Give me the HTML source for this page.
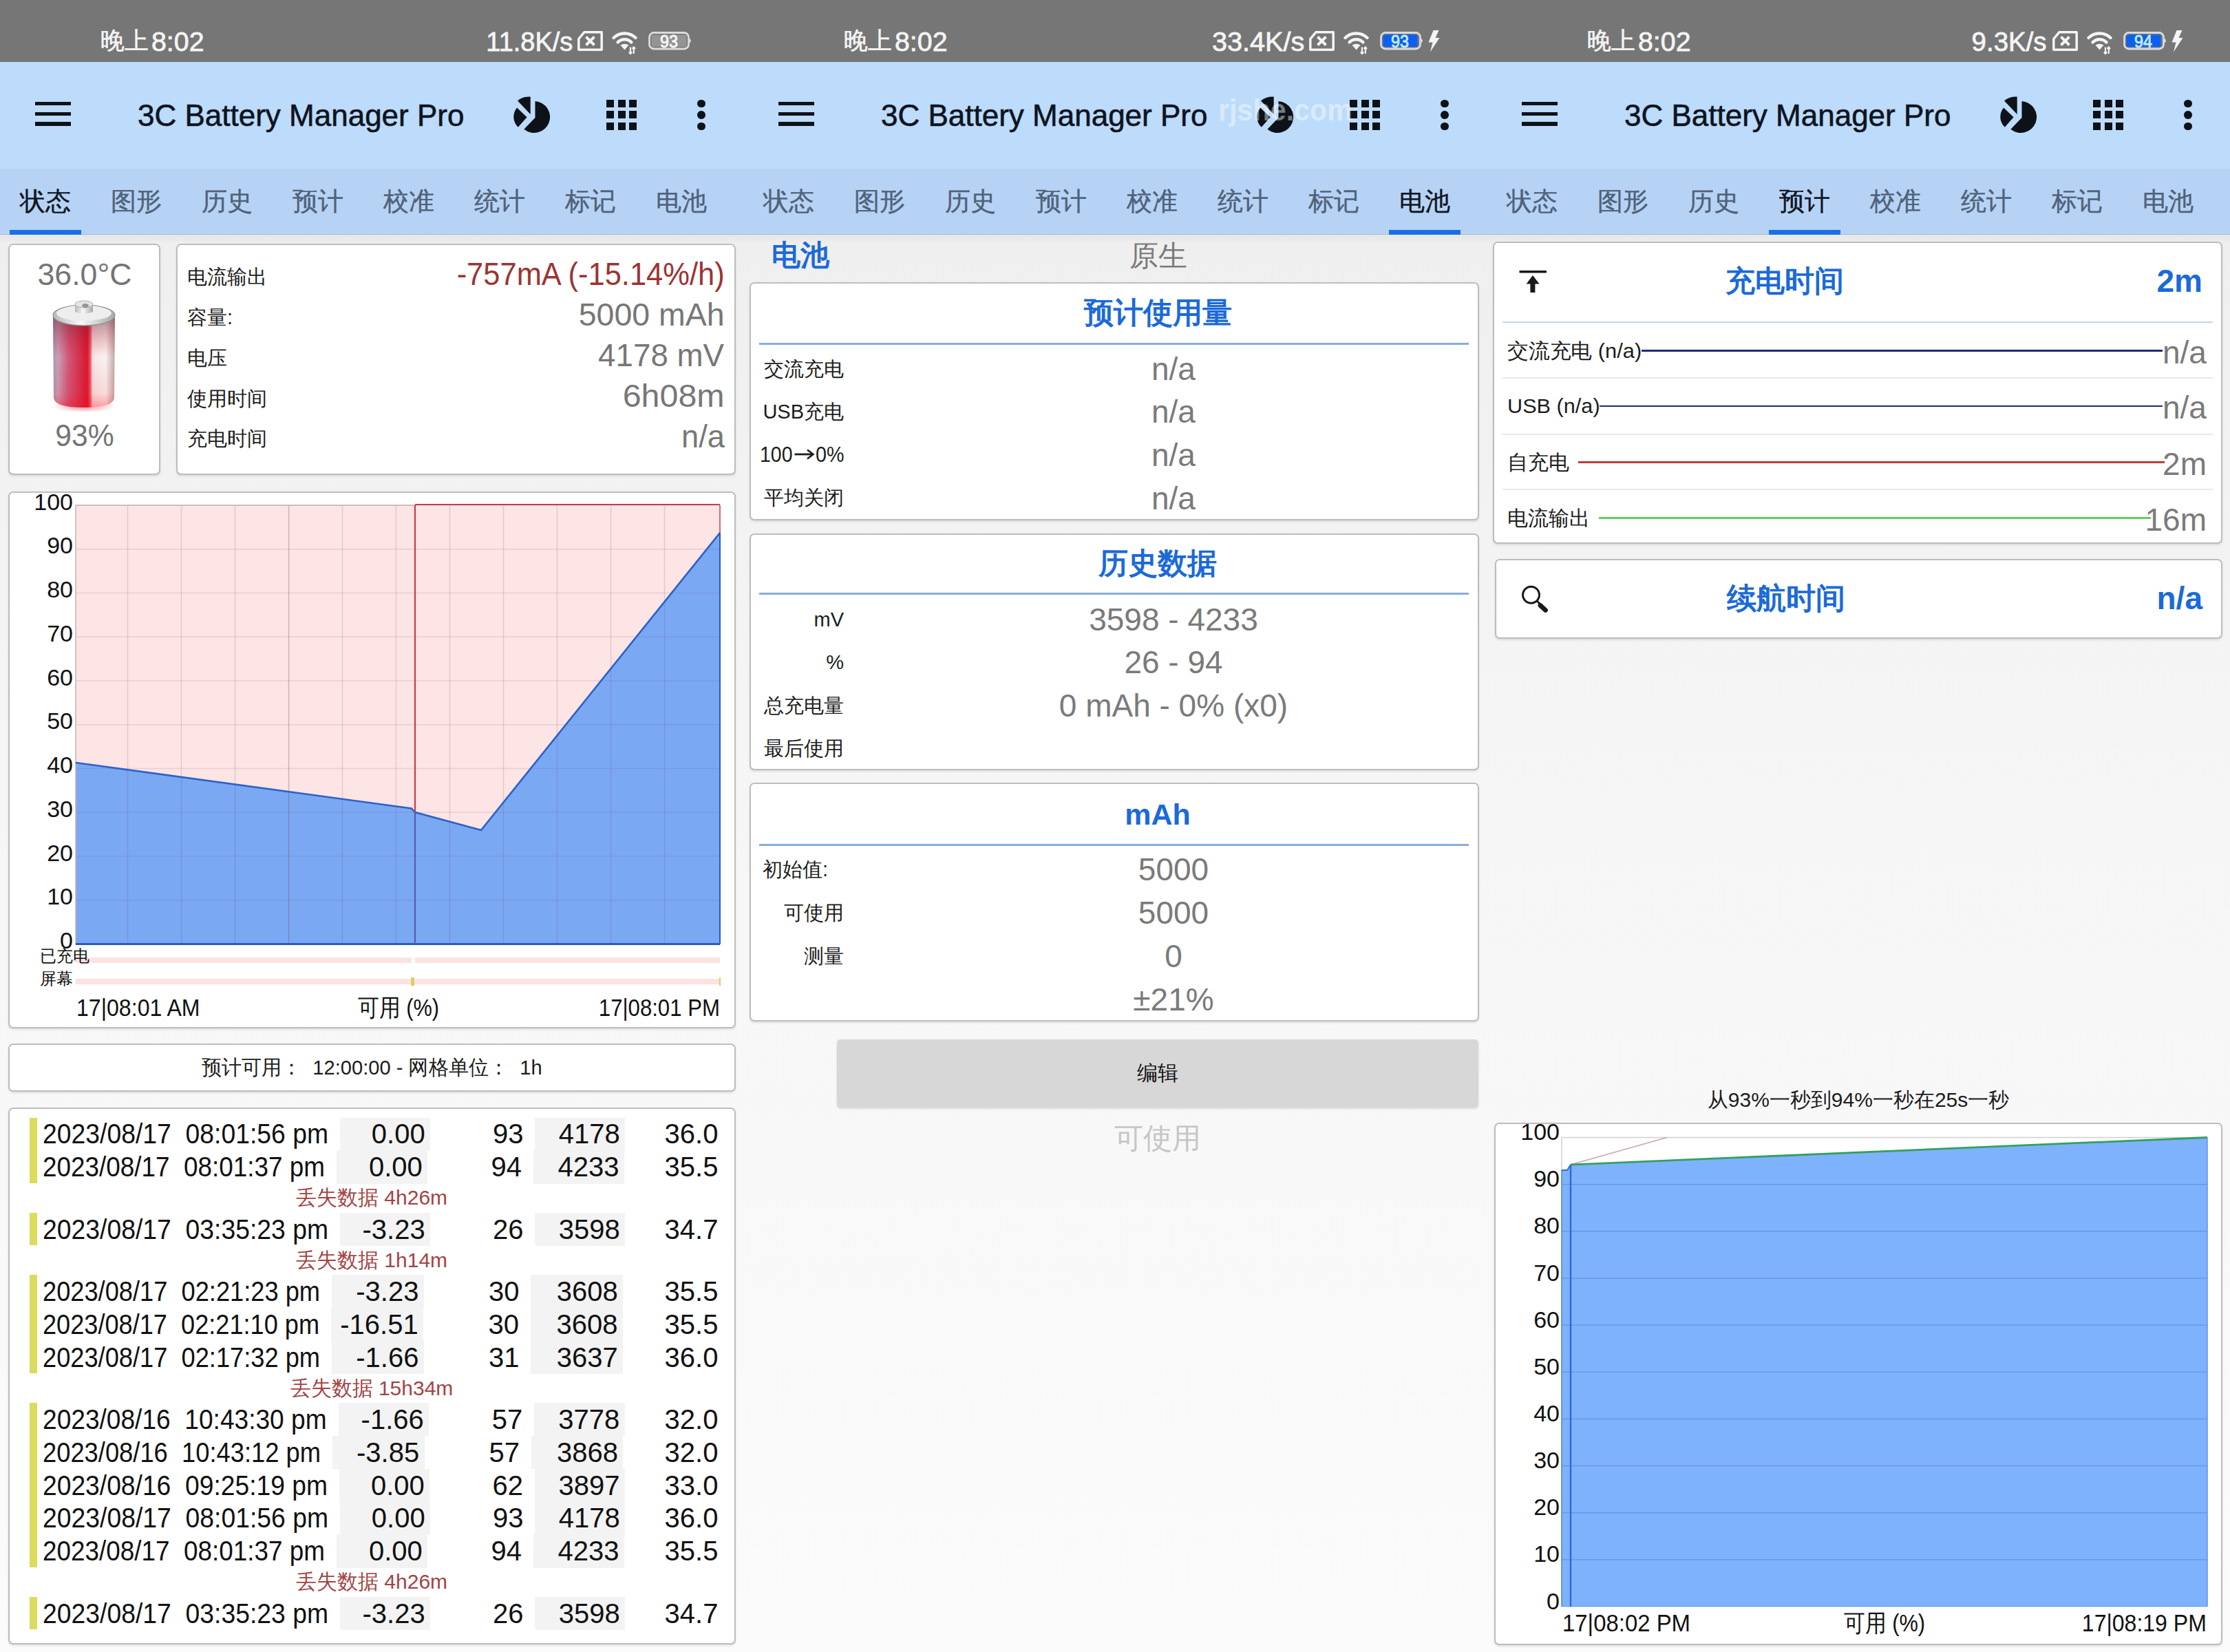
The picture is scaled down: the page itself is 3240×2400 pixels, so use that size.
<!DOCTYPE html>
<html><head><meta charset="utf-8"><title>3C Battery Manager Pro</title>
<style>
html,body{margin:0;padding:0;width:3240px;height:2400px;overflow:hidden;background:#f2f2f2;}
body{font-family:"Liberation Sans", sans-serif;position:relative;}
.panel{position:absolute;top:0;width:1080px;height:2400px;overflow:hidden;}
.t{position:absolute;white-space:pre;}
</style></head><body>
<div class="panel" style="left:0px"><div style="position:absolute;left:0.0px;top:0.0px;width:1080.0px;height:90.0px;background:#767676;"></div><div class="t" style="top:34.0px;height:49px;line-height:49px;font-size:35px;color:#f4f4f4;left:146.0px;transform:scaleX(0.9929);transform-origin:left;-webkit-text-stroke:0.6px #f4f4f4;">晚上</div><div class="t" style="top:33.0px;height:55px;line-height:55px;font-size:39px;color:#f4f4f4;left:219.6px;transform:scaleX(1.0078);transform-origin:left;-webkit-text-stroke:0.8px #f4f4f4;">8:02</div><div class="t" style="top:32.5px;height:55px;line-height:55px;font-size:39px;color:#f4f4f4;left:703.1px;transform:scaleX(0.9740);transform-origin:right;-webkit-text-stroke:0.8px #f4f4f4;">11.8K/s</div><svg style="position:absolute;left:839px;top:45px" width="38" height="30" viewBox="0 0 38 30"><path d="M1.8 11.5 L9.8 1.8 L35.2 1.8 L35.2 27.2 L1.8 27.2 Z" fill="none" stroke="#f4f4f4" stroke-width="3.5" stroke-linejoin="round"/><path d="M12.5 8.5 L24.5 20.5 M24.5 8.5 L12.5 20.5" stroke="#f4f4f4" stroke-width="3.9"/></svg><svg style="position:absolute;left:889px;top:45px" width="40" height="36" viewBox="0 0 40 36"><path d="M2.6 9.9 A23 23 0 0 1 34.4 9.9" fill="none" stroke="#f4f4f4" stroke-width="4.4" stroke-linecap="round"/><path d="M8.6 16.4 A14 14 0 0 1 28.4 16.4" fill="none" stroke="#f4f4f4" stroke-width="4.4" stroke-linecap="round"/><path d="M12.5 20.5 Q18.5 16.8 24.5 20.5 L18.5 27.5 Z" fill="#f4f4f4"/><path d="M27 23.5 L27 33 M24.8 30.5 L27 33 L29.2 30.5 M31.8 33 L31.8 23.5 M29.6 26 L31.8 23.5 L34 26" stroke="#f4f4f4" stroke-width="2.2" fill="none"/></svg><svg style="position:absolute;left:942px;top:46px" width="66" height="27" viewBox="0 0 66 27"><rect x="1.5" y="1.5" width="57" height="23.5" rx="6.5" fill="none" stroke="#dadada" stroke-width="2.8"/><rect x="4.5" y="4.5" width="51" height="17.5" rx="2.5" fill="#949494"/><path d="M59.5 9.5 Q64.5 13.2 59.5 17 Z" fill="#dadada"/></svg><div class="t" style="top:43.1px;height:35px;line-height:35px;font-size:25px;color:#f6f6f6;left:957.6px;transform:scaleX(0.9348);transform-origin:center;-webkit-text-stroke:0.9px #f6f6f6;">93</div><div style="position:absolute;left:0.0px;top:90.0px;width:1080.0px;height:155.0px;background:#bddbfb;"></div><div style="position:absolute;left:51.3px;top:148.0px;width:51.3px;height:5.2px;background:#0d1218;"></div><div style="position:absolute;left:51.3px;top:162.8px;width:51.3px;height:5.2px;background:#0d1218;"></div><div style="position:absolute;left:51.3px;top:177.4px;width:51.3px;height:5.2px;background:#0d1218;"></div><div class="t" style="top:136.5px;height:62px;line-height:62px;font-size:44px;color:#0d1420;left:200.0px;-webkit-text-stroke:0.6px #0d1420;">3C Battery Manager Pro</div><svg style="position:absolute;left:744px;top:139px" width="56" height="56" viewBox="0 0 56 56"><path d="M33.5 8.05 A23 23 0 1 1 17.4 48.7 L33.5 32 Z" fill="#0d1218"/><path d="M26.7 1.5 L26.7 27 L8 7.4 A26 26 0 0 1 26.7 1.5 Z" fill="#0d1218"/><path d="M7.1 17.6 L21.6 31.3 L8.8 45.8 A20.5 20.5 0 0 1 7.1 17.6 Z" fill="#0d1218"/></svg><div style="position:absolute;left:881.0px;top:144.7px;width:11.0px;height:11.0px;background:#0d1218;"></div><div style="position:absolute;left:881.0px;top:161.4px;width:11.0px;height:11.0px;background:#0d1218;"></div><div style="position:absolute;left:881.0px;top:178.1px;width:11.0px;height:11.0px;background:#0d1218;"></div><div style="position:absolute;left:897.7px;top:144.7px;width:11.0px;height:11.0px;background:#0d1218;"></div><div style="position:absolute;left:897.7px;top:161.4px;width:11.0px;height:11.0px;background:#0d1218;"></div><div style="position:absolute;left:897.7px;top:178.1px;width:11.0px;height:11.0px;background:#0d1218;"></div><div style="position:absolute;left:914.4px;top:144.7px;width:11.0px;height:11.0px;background:#0d1218;"></div><div style="position:absolute;left:914.4px;top:161.4px;width:11.0px;height:11.0px;background:#0d1218;"></div><div style="position:absolute;left:914.4px;top:178.1px;width:11.0px;height:11.0px;background:#0d1218;"></div><div style="position:absolute;left:1013.0px;top:144.9px;width:11.6px;height:11.6px;background:#0d1218;border-radius:50%;"></div><div style="position:absolute;left:1013.0px;top:161.2px;width:11.6px;height:11.6px;background:#0d1218;border-radius:50%;"></div><div style="position:absolute;left:1013.0px;top:177.6px;width:11.6px;height:11.6px;background:#0d1218;border-radius:50%;"></div><div style="position:absolute;left:0.0px;top:245.0px;width:1080.0px;height:95.0px;background:#b6d3f6;"></div><div class="t" style="top:267.0px;height:52px;line-height:52px;font-size:37px;color:#10161e;left:29.0px;-webkit-text-stroke:0.4px #10161e;">状态</div><div class="t" style="top:267.0px;height:52px;line-height:52px;font-size:37px;color:#506278;left:161.0px;-webkit-text-stroke:0.4px #506278;">图形</div><div class="t" style="top:267.0px;height:52px;line-height:52px;font-size:37px;color:#506278;left:293.0px;-webkit-text-stroke:0.4px #506278;">历史</div><div class="t" style="top:267.0px;height:52px;line-height:52px;font-size:37px;color:#506278;left:425.0px;-webkit-text-stroke:0.4px #506278;">预计</div><div class="t" style="top:267.0px;height:52px;line-height:52px;font-size:37px;color:#506278;left:557.0px;-webkit-text-stroke:0.4px #506278;">校准</div><div class="t" style="top:267.0px;height:52px;line-height:52px;font-size:37px;color:#506278;left:689.0px;-webkit-text-stroke:0.4px #506278;">统计</div><div class="t" style="top:267.0px;height:52px;line-height:52px;font-size:37px;color:#506278;left:821.0px;-webkit-text-stroke:0.4px #506278;">标记</div><div class="t" style="top:267.0px;height:52px;line-height:52px;font-size:37px;color:#506278;left:953.0px;-webkit-text-stroke:0.4px #506278;">电池</div><div style="position:absolute;left:0.0px;top:340.0px;width:1080.0px;height:2060.0px;background:linear-gradient(#efefef,#f6f6f6 40%,#fbfbfb);"></div><div style="position:absolute;left:0.0px;top:340.0px;width:1080.0px;height:14.0px;background:linear-gradient(rgba(0,0,0,.045),rgba(0,0,0,0));"></div><div style="position:absolute;left:0.0px;top:339.5px;width:1080.0px;height:1.8px;background:#a9bad2;"></div><div style="position:absolute;left:14.0px;top:334.0px;width:104.0px;height:7.3px;background:#1a6fe6;"></div><div style="position:absolute;left:12.0px;top:354.0px;width:221.0px;height:336.0px;background:#fff;border:2px solid #bdbdbd;border-radius:7px;box-sizing:border-box;box-shadow:0 2px 3px rgba(0,0,0,.10);"></div><div class="t" style="top:366.5px;height:63px;line-height:63px;font-size:45px;color:#747474;left:53.5px;transform:scaleX(0.9922);transform-origin:center;">36.0°C</div><svg style="position:absolute;left:74px;top:432px" width="98" height="166" viewBox="0 0 98 166">
<defs>
<linearGradient id="bg1" x1="0" x2="1" y1="0" y2="0">
<stop offset="0" stop-color="#a898b0"/><stop offset="0.08" stop-color="#c8a0b8"/><stop offset="0.25" stop-color="#d05878"/>
<stop offset="0.55" stop-color="#d81830"/><stop offset="0.6" stop-color="#e85060"/><stop offset="0.64" stop-color="#f6e6e6"/><stop offset="0.85" stop-color="#faf2f2"/><stop offset="1" stop-color="#c0a8a8"/></linearGradient>
<linearGradient id="bg2" x1="0" x2="0" y1="0" y2="1">
<stop offset="0" stop-color="#502030" stop-opacity="0.5"/><stop offset="0.45" stop-color="#e00010" stop-opacity="0.0"/><stop offset="0.85" stop-color="#ff0010" stop-opacity="0.1"/><stop offset="1" stop-color="#ff0010" stop-opacity="0.35"/></linearGradient>
<linearGradient id="cap" x1="0" x2="1"><stop offset="0" stop-color="#b8b8b8"/><stop offset="0.45" stop-color="#f8f8f8"/><stop offset="1" stop-color="#a8a8a8"/></linearGradient>
<radialGradient id="glow" cx="0.5" cy="0.5" r="0.5"><stop offset="0" stop-color="#ff1030" stop-opacity="0.45"/><stop offset="1" stop-color="#ff1030" stop-opacity="0"/></radialGradient>
</defs>
<ellipse cx="48" cy="158" rx="46" ry="10" fill="url(#glow)"/>
<path d="M3 26 L4 146 Q5 160 48 160 Q91 160 92 146 L93 26 Z" fill="url(#bg1)"/>
<path d="M3 26 L4 146 Q5 160 48 160 Q91 160 92 146 L93 26 Z" fill="url(#bg2)"/>
<ellipse cx="48" cy="26" rx="45" ry="15" fill="url(#cap)" stroke="#909090" stroke-width="1.2"/>
<ellipse cx="48" cy="23" rx="40" ry="11" fill="#eeeeee"/>
<path d="M35 10 L35 21 Q48 27 61 21 L61 10 Z" fill="url(#cap)"/>
<ellipse cx="48" cy="10" rx="13" ry="5" fill="#e4e4e4" stroke="#b0b0b0" stroke-width="1"/>
<ellipse cx="50" cy="12" rx="5" ry="3" fill="#606060" opacity="0.6"/>
</svg><div class="t" style="top:601.0px;height:63px;line-height:63px;font-size:45px;color:#747474;left:77.7px;transform:scaleX(0.9492);transform-origin:center;">93%</div><div style="position:absolute;left:255.5px;top:354.0px;width:813.5px;height:336.0px;background:#fff;border:2px solid #bdbdbd;border-radius:7px;box-sizing:border-box;box-shadow:0 2px 3px rgba(0,0,0,.10);"></div><div class="t" style="top:382.2px;height:41px;line-height:41px;font-size:29px;color:#1c1c1c;left:272.0px;">电流输出</div><div class="t" style="top:440.5px;height:41px;line-height:41px;font-size:29px;color:#1c1c1c;left:272.0px;">容量:</div><div class="t" style="top:499.8px;height:41px;line-height:41px;font-size:29px;color:#1c1c1c;left:272.0px;">电压</div><div class="t" style="top:559.1px;height:41px;line-height:41px;font-size:29px;color:#1c1c1c;left:272.0px;">使用时间</div><div class="t" style="top:617.1px;height:41px;line-height:41px;font-size:29px;color:#1c1c1c;left:272.0px;">充电时间</div><div class="t" style="top:365.5px;height:64px;line-height:64px;font-size:46px;color:#9b3434;left:640.8px;transform:scaleX(0.9450);transform-origin:right;">-757mA (-15.14%/h)</div><div class="t" style="top:424.5px;height:64px;line-height:64px;font-size:46px;color:#777777;left:842.8px;transform:scaleX(1.0110);transform-origin:right;">5000 mAh</div><div class="t" style="top:483.5px;height:64px;line-height:64px;font-size:46px;color:#777777;left:868.4px;transform:scaleX(0.9939);transform-origin:right;">4178 mV</div><div class="t" style="top:542.5px;height:64px;line-height:64px;font-size:46px;color:#777777;left:911.8px;transform:scaleX(1.0522);transform-origin:right;">6h08m</div><div class="t" style="top:601.5px;height:64px;line-height:64px;font-size:46px;color:#777777;left:988.5px;transform:scaleX(0.9851);transform-origin:right;">n/a</div><div style="position:absolute;left:12.0px;top:714.0px;width:1057.0px;height:780.0px;background:#fff;border:2px solid #bdbdbd;border-radius:7px;box-sizing:border-box;box-shadow:0 2px 3px rgba(0,0,0,.10);"></div><svg style="position:absolute;left:0;top:0" width="1080" height="1500" viewBox="0 0 1080 1500"><rect x="110" y="734" width="936" height="637.5" fill="#fde4e5"/><polygon points="110,1108 598,1174.5 603,1180 699,1206 1046,774 1046,1371.5 110,1371.5" fill="#7ba8f3"/><line x1="110" x2="1046" y1="734.0" y2="734.0" stroke="#7a5a7a" stroke-opacity="0.16" stroke-width="1.5"/><line x1="110" x2="1046" y1="797.8" y2="797.8" stroke="#7a5a7a" stroke-opacity="0.16" stroke-width="1.5"/><line x1="110" x2="1046" y1="861.5" y2="861.5" stroke="#7a5a7a" stroke-opacity="0.16" stroke-width="1.5"/><line x1="110" x2="1046" y1="925.2" y2="925.2" stroke="#7a5a7a" stroke-opacity="0.16" stroke-width="1.5"/><line x1="110" x2="1046" y1="989.0" y2="989.0" stroke="#7a5a7a" stroke-opacity="0.16" stroke-width="1.5"/><line x1="110" x2="1046" y1="1052.8" y2="1052.8" stroke="#7a5a7a" stroke-opacity="0.16" stroke-width="1.5"/><line x1="110" x2="1046" y1="1116.5" y2="1116.5" stroke="#7a5a7a" stroke-opacity="0.16" stroke-width="1.5"/><line x1="110" x2="1046" y1="1180.2" y2="1180.2" stroke="#7a5a7a" stroke-opacity="0.16" stroke-width="1.5"/><line x1="110" x2="1046" y1="1244.0" y2="1244.0" stroke="#7a5a7a" stroke-opacity="0.16" stroke-width="1.5"/><line x1="110" x2="1046" y1="1307.8" y2="1307.8" stroke="#7a5a7a" stroke-opacity="0.16" stroke-width="1.5"/><line x1="110" x2="1046" y1="1371.5" y2="1371.5" stroke="#7a5a7a" stroke-opacity="0.16" stroke-width="1.5"/><line x1="185.5" x2="185.5" y1="734" y2="1371.5" stroke="#6a3a5a" stroke-opacity="0.16" stroke-width="1.5"/><line x1="263.5" x2="263.5" y1="734" y2="1371.5" stroke="#6a3a5a" stroke-opacity="0.16" stroke-width="1.5"/><line x1="341.5" x2="341.5" y1="734" y2="1371.5" stroke="#6a3a5a" stroke-opacity="0.16" stroke-width="1.5"/><line x1="419.5" x2="419.5" y1="734" y2="1371.5" stroke="#6a3a5a" stroke-opacity="0.3" stroke-width="1.5"/><line x1="497.5" x2="497.5" y1="734" y2="1371.5" stroke="#6a3a5a" stroke-opacity="0.16" stroke-width="1.5"/><line x1="575.5" x2="575.5" y1="734" y2="1371.5" stroke="#6a3a5a" stroke-opacity="0.16" stroke-width="1.5"/><line x1="653.5" x2="653.5" y1="734" y2="1371.5" stroke="#6a3a5a" stroke-opacity="0.16" stroke-width="1.5"/><line x1="731.5" x2="731.5" y1="734" y2="1371.5" stroke="#6a3a5a" stroke-opacity="0.16" stroke-width="1.5"/><line x1="809.5" x2="809.5" y1="734" y2="1371.5" stroke="#6a3a5a" stroke-opacity="0.16" stroke-width="1.5"/><line x1="887.5" x2="887.5" y1="734" y2="1371.5" stroke="#6a3a5a" stroke-opacity="0.16" stroke-width="1.5"/><line x1="965.5" x2="965.5" y1="734" y2="1371.5" stroke="#6a3a5a" stroke-opacity="0.16" stroke-width="1.5"/><line x1="110" x2="110" y1="734" y2="1371.5" stroke="#c8b0b8" stroke-width="1.5"/><line x1="110" x2="603" y1="734" y2="734" stroke="#c8b0b8" stroke-width="1.5"/><polyline points="110,1108 598,1174.5 603,1180 699,1206 1046,774" fill="none" stroke="#2a63c8" stroke-width="2.6"/><line x1="110" x2="1046" y1="1371.5" y2="1371.5" stroke="#2a5cb8" stroke-width="3"/><line x1="603" x2="603" y1="734" y2="1180" stroke="#c0404a" stroke-width="2.2"/><line x1="603" x2="603" y1="1180" y2="1371.5" stroke="#5a5ab0" stroke-width="2.2"/><line x1="603" x2="1046" y1="733" y2="733" stroke="#c0404a" stroke-width="2.2"/><line x1="1046" x2="1046" y1="734" y2="774" stroke="#c0404a" stroke-width="1.5"/><line x1="1046" x2="1046" y1="774" y2="1371.5" stroke="#2a5cb8" stroke-width="2"/><rect x="110" y="1391" width="488" height="8" fill="#fde2e2"/><rect x="603" y="1391" width="443" height="8" fill="#fde2e2"/><rect x="110" y="1422" width="936" height="8" fill="#fde2e2"/><rect x="597" y="1420" width="5" height="12" fill="#dcd060"/><rect x="1045" y="1420" width="2" height="12" fill="#dcd060"/></svg><div class="t" style="top:704.5px;height:48px;line-height:48px;font-size:34px;color:#111;left:49.3px;">100</div><div class="t" style="top:768.2px;height:48px;line-height:48px;font-size:34px;color:#111;left:68.2px;">90</div><div class="t" style="top:832.0px;height:48px;line-height:48px;font-size:34px;color:#111;left:68.2px;">80</div><div class="t" style="top:895.8px;height:48px;line-height:48px;font-size:34px;color:#111;left:68.2px;">70</div><div class="t" style="top:959.5px;height:48px;line-height:48px;font-size:34px;color:#111;left:68.2px;">60</div><div class="t" style="top:1023.2px;height:48px;line-height:48px;font-size:34px;color:#111;left:68.2px;">50</div><div class="t" style="top:1087.0px;height:48px;line-height:48px;font-size:34px;color:#111;left:68.2px;">40</div><div class="t" style="top:1150.8px;height:48px;line-height:48px;font-size:34px;color:#111;left:68.2px;">30</div><div class="t" style="top:1214.5px;height:48px;line-height:48px;font-size:34px;color:#111;left:68.2px;">20</div><div class="t" style="top:1278.2px;height:48px;line-height:48px;font-size:34px;color:#111;left:68.2px;">10</div><div class="t" style="top:1342.0px;height:48px;line-height:48px;font-size:34px;color:#111;left:87.1px;">0</div><div class="t" style="top:1371.5px;height:34px;line-height:34px;font-size:24px;color:#111;left:58.0px;">已充电</div><div class="t" style="top:1405.0px;height:34px;line-height:34px;font-size:24px;color:#111;left:58.0px;">屏幕</div><div class="t" style="top:1439.0px;height:49px;line-height:49px;font-size:35px;color:#111;left:111.0px;transform:scaleX(0.9168);transform-origin:left;">17|08:01 AM</div><div class="t" style="top:1439.0px;height:49px;line-height:49px;font-size:35px;color:#111;left:511.9px;transform:scaleX(0.8796);transform-origin:center;">可用 (%)</div><div class="t" style="top:1439.0px;height:49px;line-height:49px;font-size:35px;color:#111;left:848.2px;transform:scaleX(0.8896);transform-origin:right;">17|08:01 PM</div><div style="position:absolute;left:12.0px;top:1516.0px;width:1057.0px;height:70.0px;background:#fff;border:2px solid #bdbdbd;border-radius:7px;box-sizing:border-box;box-shadow:0 2px 3px rgba(0,0,0,.10);"></div><div class="t" style="top:1530.0px;height:42px;line-height:42px;font-size:30px;color:#1c1c1c;left:285.4px;transform:scaleX(0.9703);transform-origin:center;">预计可用：  12:00:00 - 网格单位：  1h</div><div style="position:absolute;left:12.0px;top:1609.0px;width:1057.0px;height:780.0px;background:#fff;border:2px solid #bdbdbd;border-radius:7px;box-sizing:border-box;box-shadow:0 2px 3px rgba(0,0,0,.10);"></div><div class="t" style="top:1619.4px;height:56px;line-height:56px;font-size:40px;color:#111;left:62.0px;transform:scaleX(0.9330);transform-origin:left;">2023/08/17  08:01:56 pm</div><div style="position:absolute;left:494.0px;top:1623.5px;width:130.9px;height:48.4px;background:#f3f3f3;"></div><div style="position:absolute;left:777.1px;top:1623.5px;width:130.9px;height:48.4px;background:#f3f3f3;"></div><div class="t" style="top:1619.4px;height:56px;line-height:56px;font-size:40px;color:#111;left:539.8px;">0.00</div><div class="t" style="top:1619.4px;height:56px;line-height:56px;font-size:40px;color:#111;left:715.9px;">93</div><div class="t" style="top:1619.4px;height:56px;line-height:56px;font-size:40px;color:#111;left:811.8px;">4178</div><div class="t" style="top:1619.4px;height:56px;line-height:56px;font-size:40px;color:#111;left:965.6px;">36.0</div><div class="t" style="top:1667.2px;height:56px;line-height:56px;font-size:40px;color:#111;left:62.0px;transform:scaleX(0.9217);transform-origin:left;">2023/08/17  08:01:37 pm</div><div style="position:absolute;left:489.0px;top:1671.3px;width:132.1px;height:48.4px;background:#f3f3f3;"></div><div style="position:absolute;left:774.7px;top:1671.3px;width:132.1px;height:48.4px;background:#f3f3f3;"></div><div class="t" style="top:1667.2px;height:56px;line-height:56px;font-size:40px;color:#111;left:535.9px;">0.00</div><div class="t" style="top:1667.2px;height:56px;line-height:56px;font-size:40px;color:#111;left:713.5px;">94</div><div class="t" style="top:1667.2px;height:56px;line-height:56px;font-size:40px;color:#111;left:810.5px;">4233</div><div class="t" style="top:1667.2px;height:56px;line-height:56px;font-size:40px;color:#111;left:965.6px;">35.5</div><div class="t" style="top:1719.4px;height:42px;line-height:42px;font-size:30px;color:#a34444;left:430.0px;">丢失数据 4h26m</div><div class="t" style="top:1757.6px;height:56px;line-height:56px;font-size:40px;color:#111;left:62.0px;transform:scaleX(0.9330);transform-origin:left;">2023/08/17  03:35:23 pm</div><div style="position:absolute;left:494.0px;top:1761.7px;width:130.9px;height:48.4px;background:#f3f3f3;"></div><div style="position:absolute;left:777.1px;top:1761.7px;width:130.9px;height:48.4px;background:#f3f3f3;"></div><div class="t" style="top:1757.6px;height:56px;line-height:56px;font-size:40px;color:#111;left:526.5px;">-3.23</div><div class="t" style="top:1757.6px;height:56px;line-height:56px;font-size:40px;color:#111;left:715.9px;">26</div><div class="t" style="top:1757.6px;height:56px;line-height:56px;font-size:40px;color:#111;left:811.8px;">3598</div><div class="t" style="top:1757.6px;height:56px;line-height:56px;font-size:40px;color:#111;left:965.6px;">34.7</div><div class="t" style="top:1809.8px;height:42px;line-height:42px;font-size:30px;color:#a34444;left:430.0px;">丢失数据 1h14m</div><div class="t" style="top:1848.0px;height:56px;line-height:56px;font-size:40px;color:#111;left:62.0px;transform:scaleX(0.9060);transform-origin:left;">2023/08/17  02:21:23 pm</div><div style="position:absolute;left:482.0px;top:1852.1px;width:133.7px;height:48.4px;background:#f3f3f3;"></div><div style="position:absolute;left:771.2px;top:1852.1px;width:133.7px;height:48.4px;background:#f3f3f3;"></div><div class="t" style="top:1848.0px;height:56px;line-height:56px;font-size:40px;color:#111;left:517.3px;">-3.23</div><div class="t" style="top:1848.0px;height:56px;line-height:56px;font-size:40px;color:#111;left:710.0px;">30</div><div class="t" style="top:1848.0px;height:56px;line-height:56px;font-size:40px;color:#111;left:808.7px;">3608</div><div class="t" style="top:1848.0px;height:56px;line-height:56px;font-size:40px;color:#111;left:965.6px;">35.5</div><div class="t" style="top:1895.8px;height:56px;line-height:56px;font-size:40px;color:#111;left:62.0px;transform:scaleX(0.9038);transform-origin:left;">2023/08/17  02:21:10 pm</div><div style="position:absolute;left:481.0px;top:1899.9px;width:134.0px;height:48.4px;background:#f3f3f3;"></div><div style="position:absolute;left:770.7px;top:1899.9px;width:134.0px;height:48.4px;background:#f3f3f3;"></div><div class="t" style="top:1895.8px;height:56px;line-height:56px;font-size:40px;color:#111;left:494.3px;">-16.51</div><div class="t" style="top:1895.8px;height:56px;line-height:56px;font-size:40px;color:#111;left:709.5px;">30</div><div class="t" style="top:1895.8px;height:56px;line-height:56px;font-size:40px;color:#111;left:808.4px;">3608</div><div class="t" style="top:1895.8px;height:56px;line-height:56px;font-size:40px;color:#111;left:965.6px;">35.5</div><div class="t" style="top:1943.6px;height:56px;line-height:56px;font-size:40px;color:#111;left:62.0px;transform:scaleX(0.9060);transform-origin:left;">2023/08/17  02:17:32 pm</div><div style="position:absolute;left:482.0px;top:1947.7px;width:133.7px;height:48.4px;background:#f3f3f3;"></div><div style="position:absolute;left:771.2px;top:1947.7px;width:133.7px;height:48.4px;background:#f3f3f3;"></div><div class="t" style="top:1943.6px;height:56px;line-height:56px;font-size:40px;color:#111;left:517.3px;">-1.66</div><div class="t" style="top:1943.6px;height:56px;line-height:56px;font-size:40px;color:#111;left:710.0px;">31</div><div class="t" style="top:1943.6px;height:56px;line-height:56px;font-size:40px;color:#111;left:808.7px;">3637</div><div class="t" style="top:1943.6px;height:56px;line-height:56px;font-size:40px;color:#111;left:965.6px;">36.0</div><div class="t" style="top:1995.8px;height:42px;line-height:42px;font-size:30px;color:#a34444;left:421.6px;">丢失数据 15h34m</div><div class="t" style="top:2034.0px;height:56px;line-height:56px;font-size:40px;color:#111;left:62.0px;transform:scaleX(0.9276);transform-origin:left;">2023/08/16  10:43:30 pm</div><div style="position:absolute;left:491.6px;top:2038.1px;width:131.5px;height:48.4px;background:#f3f3f3;"></div><div style="position:absolute;left:776.0px;top:2038.1px;width:131.5px;height:48.4px;background:#f3f3f3;"></div><div class="t" style="top:2034.0px;height:56px;line-height:56px;font-size:40px;color:#111;left:524.6px;">-1.66</div><div class="t" style="top:2034.0px;height:56px;line-height:56px;font-size:40px;color:#111;left:714.8px;">57</div><div class="t" style="top:2034.0px;height:56px;line-height:56px;font-size:40px;color:#111;left:811.2px;">3778</div><div class="t" style="top:2034.0px;height:56px;line-height:56px;font-size:40px;color:#111;left:965.6px;">32.0</div><div class="t" style="top:2081.8px;height:56px;line-height:56px;font-size:40px;color:#111;left:62.0px;transform:scaleX(0.9082);transform-origin:left;">2023/08/16  10:43:12 pm</div><div style="position:absolute;left:483.0px;top:2085.9px;width:133.5px;height:48.4px;background:#f3f3f3;"></div><div style="position:absolute;left:771.7px;top:2085.9px;width:133.5px;height:48.4px;background:#f3f3f3;"></div><div class="t" style="top:2081.8px;height:56px;line-height:56px;font-size:40px;color:#111;left:518.0px;">-3.85</div><div class="t" style="top:2081.8px;height:56px;line-height:56px;font-size:40px;color:#111;left:710.5px;">57</div><div class="t" style="top:2081.8px;height:56px;line-height:56px;font-size:40px;color:#111;left:808.9px;">3868</div><div class="t" style="top:2081.8px;height:56px;line-height:56px;font-size:40px;color:#111;left:965.6px;">32.0</div><div class="t" style="top:2129.6px;height:56px;line-height:56px;font-size:40px;color:#111;left:62.0px;transform:scaleX(0.9307);transform-origin:left;">2023/08/16  09:25:19 pm</div><div style="position:absolute;left:493.0px;top:2133.7px;width:131.2px;height:48.4px;background:#f3f3f3;"></div><div style="position:absolute;left:776.7px;top:2133.7px;width:131.2px;height:48.4px;background:#f3f3f3;"></div><div class="t" style="top:2129.6px;height:56px;line-height:56px;font-size:40px;color:#111;left:539.0px;">0.00</div><div class="t" style="top:2129.6px;height:56px;line-height:56px;font-size:40px;color:#111;left:715.5px;">62</div><div class="t" style="top:2129.6px;height:56px;line-height:56px;font-size:40px;color:#111;left:811.5px;">3897</div><div class="t" style="top:2129.6px;height:56px;line-height:56px;font-size:40px;color:#111;left:965.6px;">33.0</div><div class="t" style="top:2177.4px;height:56px;line-height:56px;font-size:40px;color:#111;left:62.0px;transform:scaleX(0.9330);transform-origin:left;">2023/08/17  08:01:56 pm</div><div style="position:absolute;left:494.0px;top:2181.5px;width:130.9px;height:48.4px;background:#f3f3f3;"></div><div style="position:absolute;left:777.1px;top:2181.5px;width:130.9px;height:48.4px;background:#f3f3f3;"></div><div class="t" style="top:2177.4px;height:56px;line-height:56px;font-size:40px;color:#111;left:539.8px;">0.00</div><div class="t" style="top:2177.4px;height:56px;line-height:56px;font-size:40px;color:#111;left:715.9px;">93</div><div class="t" style="top:2177.4px;height:56px;line-height:56px;font-size:40px;color:#111;left:811.8px;">4178</div><div class="t" style="top:2177.4px;height:56px;line-height:56px;font-size:40px;color:#111;left:965.6px;">36.0</div><div class="t" style="top:2225.2px;height:56px;line-height:56px;font-size:40px;color:#111;left:62.0px;transform:scaleX(0.9217);transform-origin:left;">2023/08/17  08:01:37 pm</div><div style="position:absolute;left:489.0px;top:2229.3px;width:132.1px;height:48.4px;background:#f3f3f3;"></div><div style="position:absolute;left:774.7px;top:2229.3px;width:132.1px;height:48.4px;background:#f3f3f3;"></div><div class="t" style="top:2225.2px;height:56px;line-height:56px;font-size:40px;color:#111;left:535.9px;">0.00</div><div class="t" style="top:2225.2px;height:56px;line-height:56px;font-size:40px;color:#111;left:713.5px;">94</div><div class="t" style="top:2225.2px;height:56px;line-height:56px;font-size:40px;color:#111;left:810.5px;">4233</div><div class="t" style="top:2225.2px;height:56px;line-height:56px;font-size:40px;color:#111;left:965.6px;">35.5</div><div class="t" style="top:2277.4px;height:42px;line-height:42px;font-size:30px;color:#a34444;left:430.0px;">丢失数据 4h26m</div><div class="t" style="top:2315.6px;height:56px;line-height:56px;font-size:40px;color:#111;left:62.0px;transform:scaleX(0.9330);transform-origin:left;">2023/08/17  03:35:23 pm</div><div style="position:absolute;left:494.0px;top:2319.7px;width:130.9px;height:48.4px;background:#f3f3f3;"></div><div style="position:absolute;left:777.1px;top:2319.7px;width:130.9px;height:48.4px;background:#f3f3f3;"></div><div class="t" style="top:2315.6px;height:56px;line-height:56px;font-size:40px;color:#111;left:526.5px;">-3.23</div><div class="t" style="top:2315.6px;height:56px;line-height:56px;font-size:40px;color:#111;left:715.9px;">26</div><div class="t" style="top:2315.6px;height:56px;line-height:56px;font-size:40px;color:#111;left:811.8px;">3598</div><div class="t" style="top:2315.6px;height:56px;line-height:56px;font-size:40px;color:#111;left:965.6px;">34.7</div><div style="position:absolute;left:42.6px;top:1623.5px;width:11.4px;height:95.6px;background:#dcdb5c;"></div><div style="position:absolute;left:42.6px;top:1761.7px;width:11.4px;height:47.8px;background:#dcdb5c;"></div><div style="position:absolute;left:42.6px;top:1852.1px;width:11.4px;height:143.4px;background:#dcdb5c;"></div><div style="position:absolute;left:42.6px;top:2038.1px;width:11.4px;height:239.0px;background:#dcdb5c;"></div><div style="position:absolute;left:42.6px;top:2319.7px;width:11.4px;height:47.8px;background:#dcdb5c;"></div></div><div class="panel" style="left:1080px"><div style="position:absolute;left:0.0px;top:0.0px;width:1080.0px;height:90.0px;background:#767676;"></div><div class="t" style="top:34.0px;height:49px;line-height:49px;font-size:35px;color:#f4f4f4;left:146.0px;transform:scaleX(0.9929);transform-origin:left;-webkit-text-stroke:0.6px #f4f4f4;">晚上</div><div class="t" style="top:33.0px;height:55px;line-height:55px;font-size:39px;color:#f4f4f4;left:219.6px;transform:scaleX(1.0078);transform-origin:left;-webkit-text-stroke:0.8px #f4f4f4;">8:02</div><div class="t" style="top:32.5px;height:55px;line-height:55px;font-size:39px;color:#f4f4f4;left:682.7px;transform:scaleX(1.0154);transform-origin:right;-webkit-text-stroke:0.8px #f4f4f4;">33.4K/s</div><svg style="position:absolute;left:821.6px;top:45px" width="38" height="30" viewBox="0 0 38 30"><path d="M1.8 11.5 L9.8 1.8 L35.2 1.8 L35.2 27.2 L1.8 27.2 Z" fill="none" stroke="#f4f4f4" stroke-width="3.5" stroke-linejoin="round"/><path d="M12.5 8.5 L24.5 20.5 M24.5 8.5 L12.5 20.5" stroke="#f4f4f4" stroke-width="3.9"/></svg><svg style="position:absolute;left:871.6px;top:45px" width="40" height="36" viewBox="0 0 40 36"><path d="M2.6 9.9 A23 23 0 0 1 34.4 9.9" fill="none" stroke="#f4f4f4" stroke-width="4.4" stroke-linecap="round"/><path d="M8.6 16.4 A14 14 0 0 1 28.4 16.4" fill="none" stroke="#f4f4f4" stroke-width="4.4" stroke-linecap="round"/><path d="M12.5 20.5 Q18.5 16.8 24.5 20.5 L18.5 27.5 Z" fill="#f4f4f4"/><path d="M27 23.5 L27 33 M24.8 30.5 L27 33 L29.2 30.5 M31.8 33 L31.8 23.5 M29.6 26 L31.8 23.5 L34 26" stroke="#f4f4f4" stroke-width="2.2" fill="none"/></svg><svg style="position:absolute;left:924.6px;top:46px" width="66" height="27" viewBox="0 0 66 27"><rect x="1.5" y="1.5" width="57" height="23.5" rx="6.5" fill="none" stroke="#dadada" stroke-width="2.8"/><rect x="4.5" y="4.5" width="50" height="17.5" rx="2.5" fill="#0b60f2"/><path d="M59.5 9.5 Q64.5 13.2 59.5 17 Z" fill="#dadada"/></svg><div class="t" style="top:43.1px;height:35px;line-height:35px;font-size:25px;color:#c4ecff;left:940.2px;transform:scaleX(0.9348);transform-origin:center;-webkit-text-stroke:0.9px #c4ecff;">93</div><svg style="position:absolute;left:993.1px;top:43px" width="20" height="34" viewBox="0 0 20 34"><path d="M9.5 1 L17.5 1 L12.5 12 L18.5 12 L5 32.5 L8.5 18.5 L2.5 18.5 Z" fill="#f4f4f4"/></svg><div style="position:absolute;left:0.0px;top:90.0px;width:1080.0px;height:155.0px;background:#bddbfb;"></div><div style="position:absolute;left:51.3px;top:148.0px;width:51.3px;height:5.2px;background:#0d1218;"></div><div style="position:absolute;left:51.3px;top:162.8px;width:51.3px;height:5.2px;background:#0d1218;"></div><div style="position:absolute;left:51.3px;top:177.4px;width:51.3px;height:5.2px;background:#0d1218;"></div><div class="t" style="top:136.5px;height:62px;line-height:62px;font-size:44px;color:#0d1420;left:200.0px;-webkit-text-stroke:0.6px #0d1420;">3C Battery Manager Pro</div><svg style="position:absolute;left:744px;top:139px" width="56" height="56" viewBox="0 0 56 56"><path d="M33.5 8.05 A23 23 0 1 1 17.4 48.7 L33.5 32 Z" fill="#0d1218"/><path d="M26.7 1.5 L26.7 27 L8 7.4 A26 26 0 0 1 26.7 1.5 Z" fill="#0d1218"/><path d="M7.1 17.6 L21.6 31.3 L8.8 45.8 A20.5 20.5 0 0 1 7.1 17.6 Z" fill="#0d1218"/></svg><div style="position:absolute;left:881.0px;top:144.7px;width:11.0px;height:11.0px;background:#0d1218;"></div><div style="position:absolute;left:881.0px;top:161.4px;width:11.0px;height:11.0px;background:#0d1218;"></div><div style="position:absolute;left:881.0px;top:178.1px;width:11.0px;height:11.0px;background:#0d1218;"></div><div style="position:absolute;left:897.7px;top:144.7px;width:11.0px;height:11.0px;background:#0d1218;"></div><div style="position:absolute;left:897.7px;top:161.4px;width:11.0px;height:11.0px;background:#0d1218;"></div><div style="position:absolute;left:897.7px;top:178.1px;width:11.0px;height:11.0px;background:#0d1218;"></div><div style="position:absolute;left:914.4px;top:144.7px;width:11.0px;height:11.0px;background:#0d1218;"></div><div style="position:absolute;left:914.4px;top:161.4px;width:11.0px;height:11.0px;background:#0d1218;"></div><div style="position:absolute;left:914.4px;top:178.1px;width:11.0px;height:11.0px;background:#0d1218;"></div><div style="position:absolute;left:1013.0px;top:144.9px;width:11.6px;height:11.6px;background:#0d1218;border-radius:50%;"></div><div style="position:absolute;left:1013.0px;top:161.2px;width:11.6px;height:11.6px;background:#0d1218;border-radius:50%;"></div><div style="position:absolute;left:1013.0px;top:177.6px;width:11.6px;height:11.6px;background:#0d1218;border-radius:50%;"></div><div class="t" style="top:129.0px;height:62px;line-height:62px;font-size:44px;color:rgba(255,255,255,0.45);font-weight:700;left:690.0px;transform:scaleX(0.9381);transform-origin:left;">rjshe.com</div><div style="position:absolute;left:0.0px;top:245.0px;width:1080.0px;height:95.0px;background:#b6d3f6;"></div><div class="t" style="top:267.0px;height:52px;line-height:52px;font-size:37px;color:#506278;left:29.0px;-webkit-text-stroke:0.4px #506278;">状态</div><div class="t" style="top:267.0px;height:52px;line-height:52px;font-size:37px;color:#506278;left:161.0px;-webkit-text-stroke:0.4px #506278;">图形</div><div class="t" style="top:267.0px;height:52px;line-height:52px;font-size:37px;color:#506278;left:293.0px;-webkit-text-stroke:0.4px #506278;">历史</div><div class="t" style="top:267.0px;height:52px;line-height:52px;font-size:37px;color:#506278;left:425.0px;-webkit-text-stroke:0.4px #506278;">预计</div><div class="t" style="top:267.0px;height:52px;line-height:52px;font-size:37px;color:#506278;left:557.0px;-webkit-text-stroke:0.4px #506278;">校准</div><div class="t" style="top:267.0px;height:52px;line-height:52px;font-size:37px;color:#506278;left:689.0px;-webkit-text-stroke:0.4px #506278;">统计</div><div class="t" style="top:267.0px;height:52px;line-height:52px;font-size:37px;color:#506278;left:821.0px;-webkit-text-stroke:0.4px #506278;">标记</div><div class="t" style="top:267.0px;height:52px;line-height:52px;font-size:37px;color:#10161e;left:953.0px;-webkit-text-stroke:0.4px #10161e;">电池</div><div style="position:absolute;left:0.0px;top:340.0px;width:1080.0px;height:2060.0px;background:linear-gradient(#efefef,#f6f6f6 40%,#fbfbfb);"></div><div style="position:absolute;left:0.0px;top:340.0px;width:1080.0px;height:14.0px;background:linear-gradient(rgba(0,0,0,.045),rgba(0,0,0,0));"></div><div style="position:absolute;left:0.0px;top:339.5px;width:1080.0px;height:1.8px;background:#a9bad2;"></div><div style="position:absolute;left:938.0px;top:334.0px;width:104.0px;height:7.3px;background:#1a6fe6;"></div><div class="t" style="top:341.2px;height:59px;line-height:59px;font-size:42px;color:#1b6ad8;font-weight:700;left:40.5px;">电池</div><div class="t" style="top:341.5px;height:59px;line-height:59px;font-size:42px;color:#7a7a7a;left:561.0px;">原生</div><div style="position:absolute;left:9.0px;top:410.0px;width:1060.0px;height:346.0px;background:#fff;border:2px solid #bdbdbd;border-radius:7px;box-sizing:border-box;box-shadow:0 2px 3px rgba(0,0,0,.10);"></div><div class="t" style="top:424.0px;height:60px;line-height:60px;font-size:43px;color:#1b6ad8;font-weight:700;left:494.5px;">预计使用量</div><div style="position:absolute;left:23.0px;top:497.5px;width:1031.0px;height:3.0px;background:#86aedd;"></div><div class="t" style="top:515.5px;height:41px;line-height:41px;font-size:29px;color:#1c1c1c;left:30.0px;">交流充电</div><div class="t" style="top:504.0px;height:64px;line-height:64px;font-size:46px;color:#7a7a7a;left:593.0px;">n/a</div><div class="t" style="top:577.5px;height:41px;line-height:41px;font-size:29px;color:#1c1c1c;left:28.4px;">USB充电</div><div class="t" style="top:566.0px;height:64px;line-height:64px;font-size:46px;color:#7a7a7a;left:593.0px;">n/a</div><div class="t" style="top:628.6px;height:64px;line-height:64px;font-size:46px;color:#7a7a7a;left:593.0px;">n/a</div><div class="t" style="top:703.0px;height:41px;line-height:41px;font-size:29px;color:#1c1c1c;left:30.0px;">平均关闭</div><div class="t" style="top:691.5px;height:64px;line-height:64px;font-size:46px;color:#7a7a7a;left:593.0px;">n/a</div><div class="t" style="top:638.5px;height:43px;line-height:43px;font-size:31px;color:#1c1c1c;left:24.0px;transform:scaleX(0.9182);transform-origin:left;">100</div><svg style="position:absolute;left:74px;top:652px" width="30" height="16" viewBox="0 0 30 16"><path d="M0.5 8 L27 8" stroke="#1c1c1c" stroke-width="2.8"/><path d="M19 1.5 L27.5 8 L19 14.5" fill="none" stroke="#1c1c1c" stroke-width="2.6"/></svg><div class="t" style="top:638.5px;height:43px;line-height:43px;font-size:31px;color:#1c1c1c;left:105.0px;transform:scaleX(0.9261);transform-origin:left;">0%</div><div style="position:absolute;left:9.0px;top:774.5px;width:1060.0px;height:344.5px;background:#fff;border:2px solid #bdbdbd;border-radius:7px;box-sizing:border-box;box-shadow:0 2px 3px rgba(0,0,0,.10);"></div><div class="t" style="top:788.0px;height:60px;line-height:60px;font-size:43px;color:#1b6ad8;font-weight:700;left:516.0px;">历史数据</div><div style="position:absolute;left:23.0px;top:861.2px;width:1031.0px;height:3.0px;background:#86aedd;"></div><div class="t" style="top:879.5px;height:41px;line-height:41px;font-size:29px;color:#1c1c1c;left:102.5px;">mV</div><div class="t" style="top:868.0px;height:64px;line-height:64px;font-size:46px;color:#7a7a7a;left:502.2px;">3598 - 4233</div><div class="t" style="top:941.5px;height:41px;line-height:41px;font-size:29px;color:#1c1c1c;left:120.2px;">%</div><div class="t" style="top:930.0px;height:64px;line-height:64px;font-size:46px;color:#7a7a7a;left:553.4px;">26 - 94</div><div class="t" style="top:1004.5px;height:41px;line-height:41px;font-size:29px;color:#1c1c1c;left:30.0px;">总充电量</div><div class="t" style="top:993.0px;height:64px;line-height:64px;font-size:46px;color:#7a7a7a;left:458.8px;">0 mAh - 0% (x0)</div><div class="t" style="top:1066.5px;height:41px;line-height:41px;font-size:29px;color:#1c1c1c;left:30.0px;">最后使用</div><div style="position:absolute;left:9.0px;top:1137.0px;width:1060.0px;height:346.5px;background:#fff;border:2px solid #bdbdbd;border-radius:7px;box-sizing:border-box;box-shadow:0 2px 3px rgba(0,0,0,.10);"></div><div class="t" style="top:1153.0px;height:60px;line-height:60px;font-size:43px;color:#1b6ad8;font-weight:700;left:554.2px;">mAh</div><div style="position:absolute;left:23.0px;top:1225.5px;width:1031.0px;height:3.0px;background:#86aedd;"></div><div class="t" style="top:1242.5px;height:41px;line-height:41px;font-size:29px;color:#1c1c1c;left:28.0px;">初始值:</div><div class="t" style="top:1231.0px;height:64px;line-height:64px;font-size:46px;color:#7a7a7a;left:573.8px;">5000</div><div class="t" style="top:1305.5px;height:41px;line-height:41px;font-size:29px;color:#1c1c1c;left:59.0px;">可使用</div><div class="t" style="top:1294.0px;height:64px;line-height:64px;font-size:46px;color:#7a7a7a;left:573.8px;">5000</div><div class="t" style="top:1368.5px;height:41px;line-height:41px;font-size:29px;color:#1c1c1c;left:88.0px;">测量</div><div class="t" style="top:1357.0px;height:64px;line-height:64px;font-size:46px;color:#7a7a7a;left:612.2px;">0</div><div class="t" style="top:1420.0px;height:64px;line-height:64px;font-size:46px;color:#7a7a7a;left:566.3px;">±21%</div><div style="position:absolute;left:135.6px;top:1510.0px;width:932.4px;height:99.0px;background:#d7d7d7;border-radius:5px;box-shadow:0 2px 3px rgba(0,0,0,.12);"></div><div class="t" style="top:1537.6px;height:42px;line-height:42px;font-size:30px;color:#141414;left:572.0px;">编辑</div><div class="t" style="top:1623.5px;height:59px;line-height:59px;font-size:42px;color:#c6c6c6;left:539.0px;">可使用</div></div><div class="panel" style="left:2160px"><div style="position:absolute;left:0.0px;top:0.0px;width:1080.0px;height:90.0px;background:#767676;"></div><div class="t" style="top:34.0px;height:49px;line-height:49px;font-size:35px;color:#f4f4f4;left:146.0px;transform:scaleX(0.9929);transform-origin:left;-webkit-text-stroke:0.6px #f4f4f4;">晚上</div><div class="t" style="top:33.0px;height:55px;line-height:55px;font-size:39px;color:#f4f4f4;left:219.6px;transform:scaleX(1.0078);transform-origin:left;-webkit-text-stroke:0.8px #f4f4f4;">8:02</div><div class="t" style="top:32.5px;height:55px;line-height:55px;font-size:39px;color:#f4f4f4;left:703.0px;transform:scaleX(0.9857);transform-origin:right;-webkit-text-stroke:0.8px #f4f4f4;">9.3K/s</div><svg style="position:absolute;left:821.6px;top:45px" width="38" height="30" viewBox="0 0 38 30"><path d="M1.8 11.5 L9.8 1.8 L35.2 1.8 L35.2 27.2 L1.8 27.2 Z" fill="none" stroke="#f4f4f4" stroke-width="3.5" stroke-linejoin="round"/><path d="M12.5 8.5 L24.5 20.5 M24.5 8.5 L12.5 20.5" stroke="#f4f4f4" stroke-width="3.9"/></svg><svg style="position:absolute;left:871.6px;top:45px" width="40" height="36" viewBox="0 0 40 36"><path d="M2.6 9.9 A23 23 0 0 1 34.4 9.9" fill="none" stroke="#f4f4f4" stroke-width="4.4" stroke-linecap="round"/><path d="M8.6 16.4 A14 14 0 0 1 28.4 16.4" fill="none" stroke="#f4f4f4" stroke-width="4.4" stroke-linecap="round"/><path d="M12.5 20.5 Q18.5 16.8 24.5 20.5 L18.5 27.5 Z" fill="#f4f4f4"/><path d="M27 23.5 L27 33 M24.8 30.5 L27 33 L29.2 30.5 M31.8 33 L31.8 23.5 M29.6 26 L31.8 23.5 L34 26" stroke="#f4f4f4" stroke-width="2.2" fill="none"/></svg><svg style="position:absolute;left:924.6px;top:46px" width="66" height="27" viewBox="0 0 66 27"><rect x="1.5" y="1.5" width="57" height="23.5" rx="6.5" fill="none" stroke="#dadada" stroke-width="2.8"/><rect x="4.5" y="4.5" width="50" height="17.5" rx="2.5" fill="#0b60f2"/><path d="M59.5 9.5 Q64.5 13.2 59.5 17 Z" fill="#dadada"/></svg><div class="t" style="top:43.1px;height:35px;line-height:35px;font-size:25px;color:#c4ecff;left:940.2px;transform:scaleX(0.9348);transform-origin:center;-webkit-text-stroke:0.9px #c4ecff;">94</div><svg style="position:absolute;left:993.1px;top:43px" width="20" height="34" viewBox="0 0 20 34"><path d="M9.5 1 L17.5 1 L12.5 12 L18.5 12 L5 32.5 L8.5 18.5 L2.5 18.5 Z" fill="#f4f4f4"/></svg><div style="position:absolute;left:0.0px;top:90.0px;width:1080.0px;height:155.0px;background:#bddbfb;"></div><div style="position:absolute;left:51.3px;top:148.0px;width:51.3px;height:5.2px;background:#0d1218;"></div><div style="position:absolute;left:51.3px;top:162.8px;width:51.3px;height:5.2px;background:#0d1218;"></div><div style="position:absolute;left:51.3px;top:177.4px;width:51.3px;height:5.2px;background:#0d1218;"></div><div class="t" style="top:136.5px;height:62px;line-height:62px;font-size:44px;color:#0d1420;left:200.0px;-webkit-text-stroke:0.6px #0d1420;">3C Battery Manager Pro</div><svg style="position:absolute;left:744px;top:139px" width="56" height="56" viewBox="0 0 56 56"><path d="M33.5 8.05 A23 23 0 1 1 17.4 48.7 L33.5 32 Z" fill="#0d1218"/><path d="M26.7 1.5 L26.7 27 L8 7.4 A26 26 0 0 1 26.7 1.5 Z" fill="#0d1218"/><path d="M7.1 17.6 L21.6 31.3 L8.8 45.8 A20.5 20.5 0 0 1 7.1 17.6 Z" fill="#0d1218"/></svg><div style="position:absolute;left:881.0px;top:144.7px;width:11.0px;height:11.0px;background:#0d1218;"></div><div style="position:absolute;left:881.0px;top:161.4px;width:11.0px;height:11.0px;background:#0d1218;"></div><div style="position:absolute;left:881.0px;top:178.1px;width:11.0px;height:11.0px;background:#0d1218;"></div><div style="position:absolute;left:897.7px;top:144.7px;width:11.0px;height:11.0px;background:#0d1218;"></div><div style="position:absolute;left:897.7px;top:161.4px;width:11.0px;height:11.0px;background:#0d1218;"></div><div style="position:absolute;left:897.7px;top:178.1px;width:11.0px;height:11.0px;background:#0d1218;"></div><div style="position:absolute;left:914.4px;top:144.7px;width:11.0px;height:11.0px;background:#0d1218;"></div><div style="position:absolute;left:914.4px;top:161.4px;width:11.0px;height:11.0px;background:#0d1218;"></div><div style="position:absolute;left:914.4px;top:178.1px;width:11.0px;height:11.0px;background:#0d1218;"></div><div style="position:absolute;left:1013.0px;top:144.9px;width:11.6px;height:11.6px;background:#0d1218;border-radius:50%;"></div><div style="position:absolute;left:1013.0px;top:161.2px;width:11.6px;height:11.6px;background:#0d1218;border-radius:50%;"></div><div style="position:absolute;left:1013.0px;top:177.6px;width:11.6px;height:11.6px;background:#0d1218;border-radius:50%;"></div><div style="position:absolute;left:0.0px;top:245.0px;width:1080.0px;height:95.0px;background:#b6d3f6;"></div><div class="t" style="top:267.0px;height:52px;line-height:52px;font-size:37px;color:#506278;left:29.0px;-webkit-text-stroke:0.4px #506278;">状态</div><div class="t" style="top:267.0px;height:52px;line-height:52px;font-size:37px;color:#506278;left:161.0px;-webkit-text-stroke:0.4px #506278;">图形</div><div class="t" style="top:267.0px;height:52px;line-height:52px;font-size:37px;color:#506278;left:293.0px;-webkit-text-stroke:0.4px #506278;">历史</div><div class="t" style="top:267.0px;height:52px;line-height:52px;font-size:37px;color:#10161e;left:425.0px;-webkit-text-stroke:0.4px #10161e;">预计</div><div class="t" style="top:267.0px;height:52px;line-height:52px;font-size:37px;color:#506278;left:557.0px;-webkit-text-stroke:0.4px #506278;">校准</div><div class="t" style="top:267.0px;height:52px;line-height:52px;font-size:37px;color:#506278;left:689.0px;-webkit-text-stroke:0.4px #506278;">统计</div><div class="t" style="top:267.0px;height:52px;line-height:52px;font-size:37px;color:#506278;left:821.0px;-webkit-text-stroke:0.4px #506278;">标记</div><div class="t" style="top:267.0px;height:52px;line-height:52px;font-size:37px;color:#506278;left:953.0px;-webkit-text-stroke:0.4px #506278;">电池</div><div style="position:absolute;left:0.0px;top:340.0px;width:1080.0px;height:2060.0px;background:linear-gradient(#efefef,#f6f6f6 40%,#fbfbfb);"></div><div style="position:absolute;left:0.0px;top:340.0px;width:1080.0px;height:14.0px;background:linear-gradient(rgba(0,0,0,.045),rgba(0,0,0,0));"></div><div style="position:absolute;left:0.0px;top:339.5px;width:1080.0px;height:1.8px;background:#a9bad2;"></div><div style="position:absolute;left:410.0px;top:334.0px;width:104.0px;height:7.3px;background:#1a6fe6;"></div><div style="position:absolute;left:9.0px;top:350.6px;width:1060.0px;height:439.4px;background:#fff;border:2px solid #bdbdbd;border-radius:7px;box-sizing:border-box;box-shadow:0 2px 3px rgba(0,0,0,.10);"></div><svg style="position:absolute;left:46px;top:390px" width="42" height="38" viewBox="0 0 42 38"><rect x="1.4" y="3" width="39.7" height="3.6" rx="1" fill="#1a1a1a"/><path d="M21 10 L30.5 22.6 L24.4 22.6 L24.4 35 L17.4 35 L17.4 22.6 L11.6 22.6 Z" fill="#1a1a1a"/></svg><div class="t" style="top:378.0px;height:60px;line-height:60px;font-size:43px;color:#1b6ad8;font-weight:700;left:347.0px;">充电时间</div><div class="t" style="top:376.0px;height:64px;line-height:64px;font-size:46px;color:#1b6ad8;font-weight:700;left:973.5px;">2m</div><div style="position:absolute;left:23.0px;top:467.0px;width:1032.0px;height:2.0px;background:#c4d6ea;"></div><div style="position:absolute;left:23.0px;top:548.0px;width:1032.0px;height:2.0px;background:#e8e8e8;"></div><div style="position:absolute;left:23.0px;top:629.5px;width:1032.0px;height:2.0px;background:#e8e8e8;"></div><div style="position:absolute;left:23.0px;top:710.4px;width:1032.0px;height:2.0px;background:#e8e8e8;"></div><div class="t" style="top:488.5px;height:42px;line-height:42px;font-size:30px;color:#1c1c1c;left:30.0px;transform:scaleX(1.0272);transform-origin:left;">交流充电 (n/a)</div><div style="position:absolute;left:225.0px;top:508.2px;width:757.0px;height:2.6px;background:#1d2a78;"></div><div class="t" style="top:479.5px;height:64px;line-height:64px;font-size:46px;color:#7a7a7a;left:982.0px;">n/a</div><div class="t" style="top:569.0px;height:42px;line-height:42px;font-size:30px;color:#1c1c1c;left:30.0px;transform:scaleX(1.0219);transform-origin:left;">USB (n/a)</div><div style="position:absolute;left:164.0px;top:588.7px;width:818.0px;height:2.6px;background:#1d2a78;"></div><div class="t" style="top:560.0px;height:64px;line-height:64px;font-size:46px;color:#7a7a7a;left:982.0px;">n/a</div><div class="t" style="top:650.7px;height:42px;line-height:42px;font-size:30px;color:#1c1c1c;left:30.0px;">自充电</div><div style="position:absolute;left:133.0px;top:670.4px;width:852.0px;height:2.6px;background:#c83a3a;"></div><div class="t" style="top:641.7px;height:64px;line-height:64px;font-size:46px;color:#7a7a7a;left:982.1px;">2m</div><div class="t" style="top:731.6px;height:42px;line-height:42px;font-size:30px;color:#1c1c1c;left:30.0px;">电流输出</div><div style="position:absolute;left:163.0px;top:751.3px;width:802.0px;height:2.6px;background:#5fd05f;"></div><div class="t" style="top:722.6px;height:64px;line-height:64px;font-size:46px;color:#7a7a7a;left:956.5px;">16m</div><div style="position:absolute;left:12.0px;top:812.0px;width:1057.0px;height:116.0px;background:#fff;border:2px solid #bdbdbd;border-radius:7px;box-sizing:border-box;box-shadow:0 2px 3px rgba(0,0,0,.10);"></div><svg style="position:absolute;left:48px;top:849px" width="44" height="44" viewBox="0 0 44 44"><circle cx="16.5" cy="15.3" r="12" fill="none" stroke="#1a1a1a" stroke-width="2.9"/><path d="M24.5 23.5 L29.5 28.5" stroke="#1a1a1a" stroke-width="3"/><path d="M30 30.5 L37.5 37.5" stroke="#1a1a1a" stroke-width="6.8" stroke-linecap="round"/></svg><div class="t" style="top:839.0px;height:60px;line-height:60px;font-size:43px;color:#1b6ad8;font-weight:700;left:349.0px;">续航时间</div><div class="t" style="top:837.0px;height:64px;line-height:64px;font-size:46px;color:#1b6ad8;font-weight:700;left:973.5px;">n/a</div><div class="t" style="top:1577.0px;height:42px;line-height:42px;font-size:30px;color:#1c1c1c;left:320.8px;">从93%一秒到94%一秒在25s一秒</div><div style="position:absolute;left:11.0px;top:1631.0px;width:1058.0px;height:759.0px;background:#fff;border:2px solid #bdbdbd;border-radius:7px;box-sizing:border-box;box-shadow:0 2px 3px rgba(0,0,0,.10);"></div><svg style="position:absolute;left:0;top:0" width="1080" height="2400" viewBox="0 0 1080 2400"><polygon points="109,1700 117,1700 122,1692 1047,1652.5 1047,2334 109,2334" fill="#7fb2fd"/><line x1="109" x2="1047" y1="1720.7" y2="1720.7" stroke="#3a6ac0" stroke-opacity="0.35" stroke-width="1.5"/><line x1="109" x2="1047" y1="1788.8" y2="1788.8" stroke="#3a6ac0" stroke-opacity="0.35" stroke-width="1.5"/><line x1="109" x2="1047" y1="1857.0" y2="1857.0" stroke="#3a6ac0" stroke-opacity="0.35" stroke-width="1.5"/><line x1="109" x2="1047" y1="1925.1" y2="1925.1" stroke="#3a6ac0" stroke-opacity="0.35" stroke-width="1.5"/><line x1="109" x2="1047" y1="1993.2" y2="1993.2" stroke="#3a6ac0" stroke-opacity="0.35" stroke-width="1.5"/><line x1="109" x2="1047" y1="2061.4" y2="2061.4" stroke="#3a6ac0" stroke-opacity="0.35" stroke-width="1.5"/><line x1="109" x2="1047" y1="2129.6" y2="2129.6" stroke="#3a6ac0" stroke-opacity="0.35" stroke-width="1.5"/><line x1="109" x2="1047" y1="2197.7" y2="2197.7" stroke="#3a6ac0" stroke-opacity="0.35" stroke-width="1.5"/><line x1="109" x2="1047" y1="2265.8" y2="2265.8" stroke="#3a6ac0" stroke-opacity="0.35" stroke-width="1.5"/><line x1="109" x2="1047" y1="2334.0" y2="2334.0" stroke="#3a6ac0" stroke-opacity="0.35" stroke-width="1.5"/><line x1="109" x2="1047" y1="1652.5" y2="1652.5" stroke="#d0d0d0" stroke-width="1.5"/><line x1="109" x2="109" y1="1652.5" y2="1700" stroke="#d0d0d0" stroke-width="1.5"/><line x1="109" x2="109" y1="1700" y2="2334" stroke="#5080d0" stroke-width="1.5"/><line x1="122" x2="262" y1="1692" y2="1652.5" stroke="#c8a8b8" stroke-width="1.8"/><polyline points="109,1700 117,1700 122,1692" fill="none" stroke="#3070d0" stroke-width="2"/><line x1="122" x2="1047" y1="1692" y2="1652.5" stroke="#34a060" stroke-width="2.8"/><line x1="122" x2="122" y1="1692" y2="2334" stroke="#2c6ad0" stroke-width="2.4"/><line x1="1047" x2="1047" y1="1652.5" y2="2334" stroke="#6090e0" stroke-width="1.5"/></svg><div class="t" style="top:1620.0px;height:48px;line-height:48px;font-size:34px;color:#111;left:49.3px;">100</div><div class="t" style="top:1688.2px;height:48px;line-height:48px;font-size:34px;color:#111;left:68.2px;">90</div><div class="t" style="top:1756.3px;height:48px;line-height:48px;font-size:34px;color:#111;left:68.2px;">80</div><div class="t" style="top:1824.5px;height:48px;line-height:48px;font-size:34px;color:#111;left:68.2px;">70</div><div class="t" style="top:1892.6px;height:48px;line-height:48px;font-size:34px;color:#111;left:68.2px;">60</div><div class="t" style="top:1960.8px;height:48px;line-height:48px;font-size:34px;color:#111;left:68.2px;">50</div><div class="t" style="top:2028.9px;height:48px;line-height:48px;font-size:34px;color:#111;left:68.2px;">40</div><div class="t" style="top:2097.1px;height:48px;line-height:48px;font-size:34px;color:#111;left:68.2px;">30</div><div class="t" style="top:2165.2px;height:48px;line-height:48px;font-size:34px;color:#111;left:68.2px;">20</div><div class="t" style="top:2233.3px;height:48px;line-height:48px;font-size:34px;color:#111;left:68.2px;">10</div><div class="t" style="top:2301.5px;height:48px;line-height:48px;font-size:34px;color:#111;left:87.1px;">0</div><div class="t" style="top:2332.5px;height:49px;line-height:49px;font-size:35px;color:#111;left:110.0px;transform:scaleX(0.9401);transform-origin:left;">17|08:02 PM</div><div class="t" style="top:2332.5px;height:49px;line-height:49px;font-size:35px;color:#111;left:510.9px;transform:scaleX(0.8796);transform-origin:center;">可用 (%)</div><div class="t" style="top:2332.5px;height:49px;line-height:49px;font-size:35px;color:#111;left:848.2px;transform:scaleX(0.9149);transform-origin:right;">17|08:19 PM</div></div>
</body></html>
